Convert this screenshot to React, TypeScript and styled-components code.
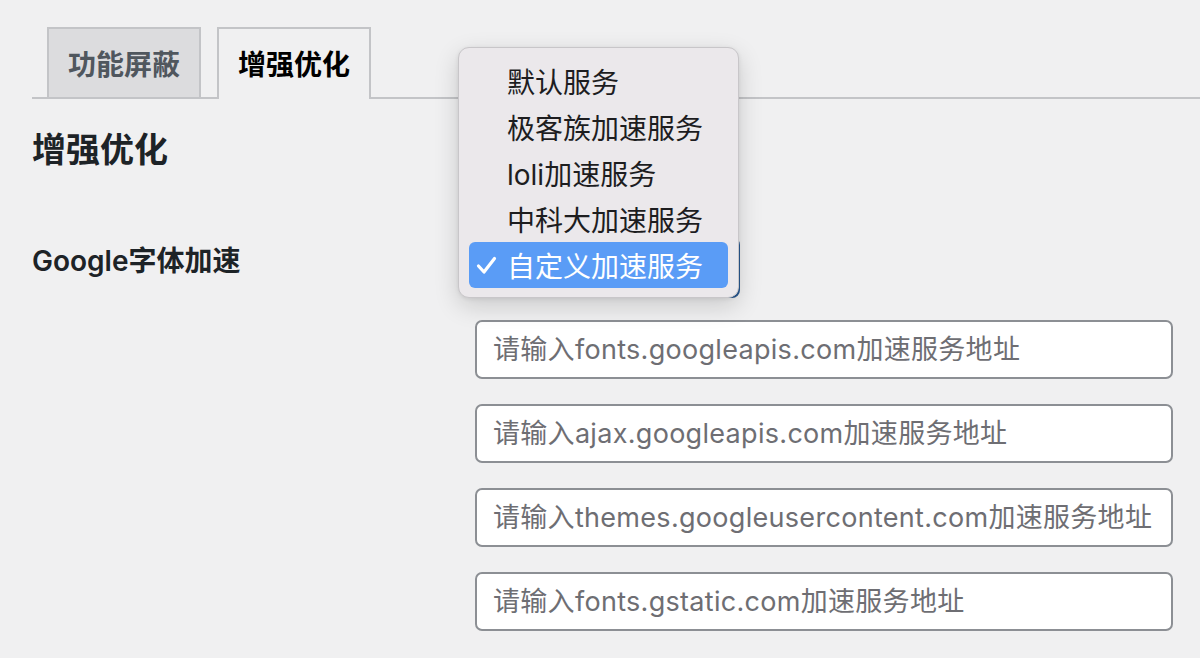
import * as React from 'react';
import styled, { createGlobalStyle } from 'styled-components';

const GlobalStyle = createGlobalStyle`
    html, body {
        margin: 0;
        padding: 0;
        background: #f0f0f1;
        font-family: Inter, "Noto Sans CJK SC", sans-serif;
        color: #1d2327;
    }
`

const Page = styled.div`
    padding: 27px 0 0 32px;
    height: 631px;
    overflow: hidden;
`

const TabBar = styled.nav`
    display: flex;
    align-items: flex-end;
    gap: 16px;
    padding-left: 15px;
    border-bottom: 2px solid #c3c4c7;
`

const Tab = styled.a<{$active?: boolean}>`
    box-sizing: border-box;
    width: 154px;
    height: ${({$active}) => $active ? '72px' : '70px'};
    margin-bottom: ${({$active}) => $active ? '-2px' : '0'};
    padding-bottom: ${({$active}) => $active ? '2px' : '0'};
    display: flex;
    align-items: center;
    justify-content: center;
    border: 2px solid #c3c4c7;
    border-bottom: none;
    background: ${({$active}) => $active ? '#f0f0f1' : '#dcdcde'};
    color: ${({$active}) => $active ? '#000' : '#50575e'};
    font-size: 28px;
    font-weight: 700;
    cursor: pointer;
`

const Heading = styled.h2`
    margin: 30px 0 0;
    font-size: 34px;
    line-height: 42px;
    font-weight: 700;
    color: #1d2327;
`

const FormRow = styled.div`
    display: grid;
    grid-template-columns: 443px 698px;
    margin-top: 66px;
`

const Label = styled.div`
    padding-top: 7px;
    font-size: 28px;
    line-height: 34px;
    font-weight: 600;
    color: #1d2327;
`

const Fields = styled.div`
    display: flex;
    flex-direction: column;
    gap: 25px;
`

const SelectWrap = styled.div`
    position: relative;
    width: 265px;
    height: 61px;
    margin-bottom: -3px;
`

const SelectBox = styled.div`
    box-sizing: border-box;
    width: 100%;
    height: 100%;
    border: 2px solid #2a5a92;
    border-radius: 8px;
    background: #fff;
`

const Menu = styled.ul`
    position: absolute;
    left: -17px;
    top: -190px;
    box-sizing: border-box;
    width: 281px;
    height: 251px;
    margin: 0;
    padding: 10px 10px 11px;
    list-style: none;
    background: #ebe8eb;
    border: 1px solid #c8c6c9;
    border-radius: 11px;
    box-shadow: 0 8px 24px rgba(0, 0, 0, 0.16), 0 1px 4px rgba(0, 0, 0, 0.08);
    z-index: 5;
`

const MenuItem = styled.li<{$selected?: boolean}>`
    position: relative;
    height: 46px;
    display: flex;
    align-items: center;
    padding-left: 38px;
    border-radius: 6px;
    font-size: 28px;
    color: ${({$selected}) => $selected ? '#fff' : '#1d1d1f'};
    background: ${({$selected}) => $selected ? '#5a9cf6' : 'transparent'};
`

const Check = styled.svg`
    position: absolute;
    left: 7px;
    top: 14px;
    width: 21px;
    height: 19px;
`

const TextInput = styled.input`
    box-sizing: border-box;
    width: 698px;
    height: 59px;
    padding: 0 16px;
    border: 2px solid #8c8f94;
    border-radius: 7px;
    background: #fff;
    font-family: Inter, "Noto Sans CJK SC", sans-serif;
    font-size: 27px;
    letter-spacing: 0.3px;
    color: #2c3338;
    outline: none;

    &::placeholder {
        color: #6e6e73;
    }
`

const services = ['默认服务', '极客族加速服务', 'loli加速服务', '中科大加速服务', '自定义加速服务']

const hosts = [
    'fonts.googleapis.com',
    'ajax.googleapis.com',
    'themes.googleusercontent.com',
    'fonts.gstatic.com',
]

export default function App() {
    return (
        <>
            <GlobalStyle />
            <Page>
                <TabBar>
                    <Tab>功能屏蔽</Tab>
                    <Tab $active>增强优化</Tab>
                </TabBar>
                <Heading>增强优化</Heading>
                <FormRow>
                    <Label>Google字体加速</Label>
                    <Fields>
                        <SelectWrap>
                            <SelectBox />
                            <Menu>
                                {services.map((s, i) => {
                                    const selected = i === services.length - 1
                                    return (
                                        <MenuItem key={s} $selected={selected}>
                                            {selected && (
                                                <Check viewBox="0 0 21 19">
                                                    <path d="M2.5 10 L8 16 L18.5 2.5" fill="none" stroke="#fff" strokeWidth="3.2" strokeLinecap="round" strokeLinejoin="round" />
                                                </Check>
                                            )}
                                            {s}
                                        </MenuItem>
                                    )
                                })}
                            </Menu>
                        </SelectWrap>
                        {hosts.map((h) => (
                            <TextInput key={h} placeholder={`请输入${h}加速服务地址`} />
                        ))}
                    </Fields>
                </FormRow>
            </Page>
        </>
    )
}
